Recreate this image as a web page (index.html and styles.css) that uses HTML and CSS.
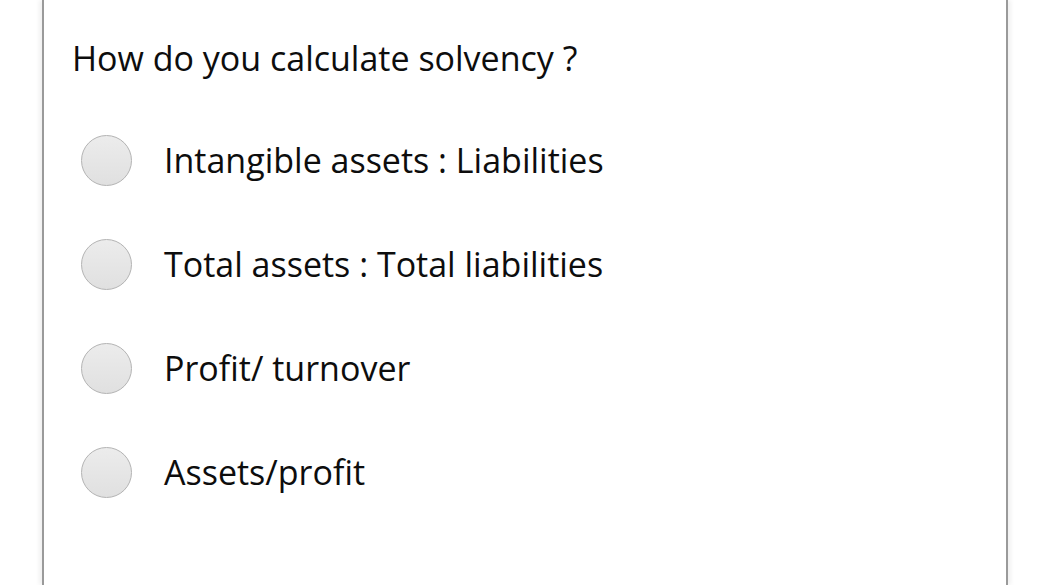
FILE: index.html
```html
<!DOCTYPE html>
<html>
<head>
<meta charset="utf-8">
<link rel="stylesheet" href="styles.css">
</head>
<body>
<div class="card">
  <div class="question">How do you calculate solvency ?</div>
  <div class="options">
    <label class="option"><span class="radio"></span><span class="label">Intangible assets : Liabilities</span></label>
    <label class="option"><span class="radio"></span><span class="label">Total assets : Total liabilities</span></label>
    <label class="option"><span class="radio"></span><span class="label">Profit/ turnover</span></label>
    <label class="option"><span class="radio"></span><span class="label">Assets/profit</span></label>
  </div>
</div>
</body>
</html>
```
FILE: styles.css
```css
html, body {
  margin: 0;
  padding: 0;
  background: #fff;
  height: 100%;
  overflow: hidden;
}
body {
  font-family: "Open Sans", "Liberation Sans", sans-serif;
  color: #0d0d0d;
}
.card {
  margin: 0 30px 0 42px;
  height: 585px;
  box-sizing: border-box;
  border-left: 2px solid #9a9a9a;
  border-right: 2px solid #9a9a9a;
  box-shadow: -3px 0 4px rgba(0,0,0,0.06), 3px 0 4px rgba(0,0,0,0.06);
  padding: 34px 0 0 28px;
}
.question {
  font-size: 34px;
  line-height: 48px;
}
.options {
  display: flex;
  flex-direction: column;
  gap: 52px;
  margin-top: 52px;
  padding-left: 9px;
}
.option {
  display: flex;
  align-items: center;
  gap: 32px;
  height: 52px;
}
.radio {
  width: 51px;
  height: 51px;
  border-radius: 50%;
  border: 1px solid #b3b3b3;
  background: linear-gradient(#ececec, #e0e0e0);
  box-sizing: border-box;
  flex: none;
}
.label {
  font-size: 34px;
  line-height: 46px;
}
```
